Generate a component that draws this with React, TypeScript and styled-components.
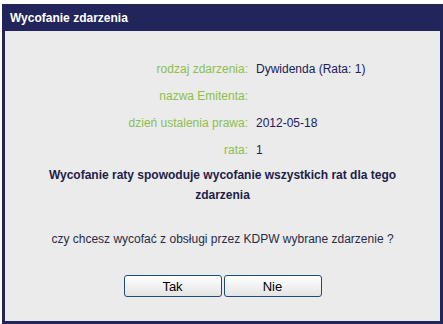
import { Fragment } from 'react';
import styled, { createGlobalStyle } from 'styled-components';

const GlobalStyle = createGlobalStyle`
  html, body {
    margin: 0;
    padding: 0;
    background: #fff;
  }
  body {
    font-family: 'Liberation Sans', Arial, sans-serif;
  }
`;

const Dialog = styled.div`
  box-sizing: border-box;
  width: 441px;
  height: 320px;
  margin: 4px 0 0 2px;
  border: 3px solid #22255b;
  display: flex;
  flex-direction: column;
  background: #ebebeb;
`;

const Header = styled.div`
  height: 24px;
  background: #22255b;
  color: #fff;
  font-weight: bold;
  font-size: 12px;
  line-height: 22px;
  padding-left: 5px;
`;

const Body = styled.div`
  flex: 1;
  display: flex;
  flex-direction: column;
  align-items: center;
  padding-top: 24px;
  font-size: 12px;
`;

const Details = styled.div`
  width: 100%;
  display: grid;
  grid-template-columns: 246px 1fr;
  grid-auto-rows: 27px;
  align-items: center;
`;

const Label = styled.div`
  color: #8cbf4c;
  text-align: right;
  padding-right: 3px;
`;

const Value = styled.div`
  color: #20205a;
  padding-left: 5px;
`;

const Warning = styled.p`
  margin: 2px 0 0;
  padding: 0 24px;
  text-align: center;
  font-weight: bold;
  line-height: 20px;
  color: #1d1d4a;
`;

const Question = styled.p`
  margin: 24px 0 0;
  line-height: 20px;
  color: #2a2a48;
  text-align: center;
`;

const Buttons = styled.div`
  display: flex;
  gap: 2px;
  margin-top: 26px;
`;

const Button = styled.button`
  box-sizing: border-box;
  width: 98px;
  height: 22px;
  border: 1px solid #1f4b78;
  border-radius: 3px;
  background: linear-gradient(#ffffff, #e4e4e4);
  font-family: 'Liberation Sans', Arial, sans-serif;
  font-size: 13px;
  color: #000;
  padding: 0;
  cursor: pointer;
`;

const rows: [string, string][] = [
  ['rodzaj zdarzenia:', 'Dywidenda (Rata: 1)'],
  ['nazwa Emitenta:', ''],
  ['dzień ustalenia prawa:', '2012-05-18'],
  ['rata:', '1'],
];

export default function App() {
  return (
    <>
      <GlobalStyle />
      <Dialog>
        <Header>Wycofanie zdarzenia</Header>
        <Body>
          <Details>
            {rows.map(([label, value]) => (
              <Fragment key={label}>
                <Label>{label}</Label>
                <Value>{value}</Value>
              </Fragment>
            ))}
          </Details>
          <Warning>Wycofanie raty spowoduje wycofanie wszystkich rat dla tego zdarzenia</Warning>
          <Question>czy chcesz wycofać z obsługi przez KDPW wybrane zdarzenie ?</Question>
          <Buttons>
            <Button>Tak</Button>
            <Button>Nie</Button>
          </Buttons>
        </Body>
      </Dialog>
    </>
  );
}
